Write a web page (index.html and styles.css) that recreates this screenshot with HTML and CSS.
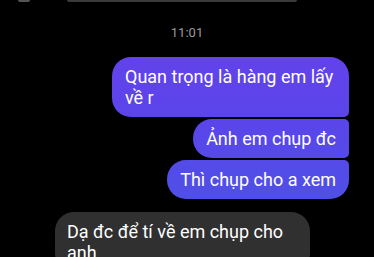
FILE: index.html
```
<!DOCTYPE html>
<html lang="vi">
<head>
    <meta charset="UTF-8">
    <meta name="viewport" content="width=device-width, initial-scale=1.0">
    <title>Chat</title>
    <link rel="stylesheet" href="styles.css">
</head>
<body>
    <div class="chat">
        <div class="prev-row">
            <div class="prev-avatar"></div>
            <div class="prev-bubble"></div>
        </div>

        <div class="time">11:01</div>

        <div class="group sent">
            <div class="bubble first">Quan trọng là hàng em lấy về r</div>
            <div class="bubble middle">Ảnh em chụp đc</div>
            <div class="bubble last">Thì chụp cho a xem</div>
        </div>

        <div class="group received">
            <div class="bubble">Dạ đc để tí về em chụp cho anh</div>
        </div>
    </div>
</body>
</html>
```

FILE: styles.css
```
body {
    margin: 0;
    padding: 0;
    background-color: #000;
    font-family: Roboto, "Noto Sans", sans-serif;
    overflow: hidden;
}
.chat {
    width: 374px;
    height: 257px;
    display: flex;
    flex-direction: column;
}
.prev-row {
    display: flex;
    align-items: flex-end;
    height: 2px;
}
.prev-avatar {
    width: 12px;
    height: 2px;
    margin-left: 18px;
    background-color: #555;
    border-radius: 0 0 6px 6px;
}
.prev-bubble {
    width: 230px;
    height: 2px;
    margin-left: 37px;
    background-color: #3a3a3a;
    border-radius: 0 0 4px 4px;
}
.time {
    margin-top: 23px;
    text-align: center;
    color: #9a9a9a;
    font-size: 13px;
    line-height: 16px;
}
.group {
    display: flex;
    flex-direction: column;
}
.bubble {
    font-size: 18px;
    line-height: 21px;
    padding: 9px 13px 9px 13px;
    color: #fff;
}
.sent {
    margin-top: 16px;
    align-items: flex-end;
    padding-right: 25px;
    gap: 2px;
}
.sent .bubble {
    max-width: 211px;
    background: linear-gradient(180deg, #6a40ea 0px, #5a45ea 120px, #4c52e6 220px);
    background-attachment: fixed;
    border-radius: 19px;
}
.sent .first {
    border-bottom-right-radius: 5px;
}
.sent .middle {
    border-top-right-radius: 5px;
    border-bottom-right-radius: 5px;
}
.sent .last {
    border-top-right-radius: 5px;
}
.received {
    margin-top: 13px;
    align-items: flex-start;
    padding-left: 55px;
}
.received .bubble {
    max-width: 230px;
    padding-left: 12px;
    background-color: #303030;
    border-radius: 19px;
}
```
